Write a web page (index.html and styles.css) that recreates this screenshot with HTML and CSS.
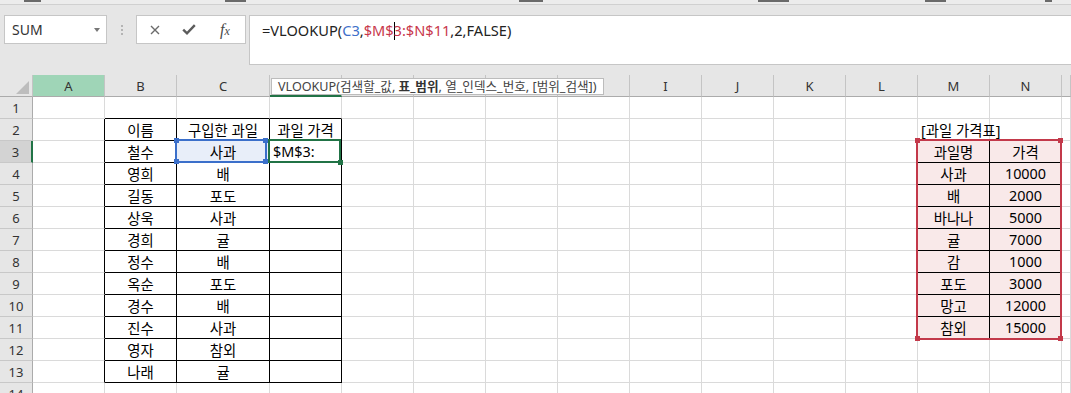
FILE: index.html
```html
<!DOCTYPE html>
<html lang="ko">
<head>
<meta charset="utf-8">
<title>Excel VLOOKUP</title>
<link rel="stylesheet" href="styles.css">
</head>
<body>
<div class="edge">
  <span class="frag f1"></span><span class="frag f2"></span><span class="frag f3"></span><span class="frag f4"></span><span class="frag f5"></span><span class="frag f6"></span>
</div>
<div class="fbar">
  <div class="namebox"><span>SUM</span><span class="drop"></span></div>
  <div class="grip"><i></i><i></i><i></i></div>
  <div class="btns">
    <svg class="ic-x" width="10" height="10" viewBox="0 0 10 10"><path d="M1 1L9 9M9 1L1 9" stroke="#6b6b6b" stroke-width="1.4" fill="none"/></svg>
    <svg class="ic-ok" width="14" height="11" viewBox="0 0 14 11"><path d="M1.2 5.6L5 9.3L12.8 1.2" stroke="#5c5c5c" stroke-width="2.4" fill="none"/></svg>
    <span class="fx">f<span class="fxx">x</span></span>
  </div>
  <div class="finput">=VLOOKUP(<span class="rb">C3</span>,<span class="rr">$M$</span><span class="caret"></span><span class="rr">3:$N$11</span>,2,FALSE)</div>
</div>
<div class="sheet">
  <!-- header (D–H labels lie under the function tooltip) -->
  <div class="c ch corner"><span class="tri"></span></div>
  <div class="c ch cga">A</div>
  <div class="c ch">B</div>
  <div class="c ch">C</div>
  <div class="c ch csel rel"><div class="tip">VLOOKUP(검색할_값, <b>표_범위</b>, 열_인덱스_번호, [범위_검색])</div></div>
  <div class="c ch"></div>
  <div class="c ch"></div>
  <div class="c ch"></div>
  <div class="c ch"></div>
  <div class="c ch">I</div>
  <div class="c ch">J</div>
  <div class="c ch">K</div>
  <div class="c ch">L</div>
  <div class="c ch">M</div>
  <div class="c ch">N</div>
  <div class="c ch"></div>
  <!-- row 1 -->
  <div class="c rh">1</div><div class="c"></div><div class="c kb"></div><div class="c kb"></div><div class="c kb"></div><div class="c"></div><div class="c"></div><div class="c"></div><div class="c"></div><div class="c"></div><div class="c"></div><div class="c"></div><div class="c"></div><div class="c"></div><div class="c"></div><div class="c"></div>
  <!-- row 2 -->
  <div class="c rh">2</div><div class="c kr"></div><div class="c kr kb">이름</div><div class="c kr kb">구입한 과일</div><div class="c kr kb">과일 가격</div><div class="c"></div><div class="c"></div><div class="c"></div><div class="c"></div><div class="c"></div><div class="c"></div><div class="c"></div><div class="c"></div><div class="c l kb">[과일 가격표]</div><div class="c kb"></div><div class="c"></div>
  <!-- row 3 -->
  <div class="c rh rsel">3</div><div class="c kr"></div><div class="c kr kb">철수</div><div class="c kr kb rel bl">사과<div class="sel sel-c"><i class="hd tl"></i><i class="hd tr"></i><i class="hd bl2"></i><i class="hd br"></i></div></div><div class="c kr kb l rel">$M$3:<div class="sel sel-d"><i class="hg"></i></div></div><div class="c"></div><div class="c"></div><div class="c"></div><div class="c"></div><div class="c"></div><div class="c"></div><div class="c"></div><div class="c"></div><div class="c kr kb pk rel">과일명<div class="sel sel-m"><i class="hr tl"></i><i class="hr tr"></i><i class="hr bl2"></i><i class="hr br"></i></div></div><div class="c kb pk">가격</div><div class="c"></div>
  <!-- row 4 -->
  <div class="c rh">4</div><div class="c kr"></div><div class="c kr kb">영희</div><div class="c kr kb">배</div><div class="c kr kb"></div><div class="c"></div><div class="c"></div><div class="c"></div><div class="c"></div><div class="c"></div><div class="c"></div><div class="c"></div><div class="c"></div><div class="c kr kb pk">사과</div><div class="c kb pk">10000</div><div class="c"></div>
  <!-- row 5 -->
  <div class="c rh">5</div><div class="c kr"></div><div class="c kr kb">길동</div><div class="c kr kb">포도</div><div class="c kr kb"></div><div class="c"></div><div class="c"></div><div class="c"></div><div class="c"></div><div class="c"></div><div class="c"></div><div class="c"></div><div class="c"></div><div class="c kr kb pk">배</div><div class="c kb pk">2000</div><div class="c"></div>
  <!-- row 6 -->
  <div class="c rh">6</div><div class="c kr"></div><div class="c kr kb">상욱</div><div class="c kr kb">사과</div><div class="c kr kb"></div><div class="c"></div><div class="c"></div><div class="c"></div><div class="c"></div><div class="c"></div><div class="c"></div><div class="c"></div><div class="c"></div><div class="c kr kb pk">바나나</div><div class="c kb pk">5000</div><div class="c"></div>
  <!-- row 7 -->
  <div class="c rh">7</div><div class="c kr"></div><div class="c kr kb">경희</div><div class="c kr kb">귤</div><div class="c kr kb"></div><div class="c"></div><div class="c"></div><div class="c"></div><div class="c"></div><div class="c"></div><div class="c"></div><div class="c"></div><div class="c"></div><div class="c kr kb pk">귤</div><div class="c kb pk">7000</div><div class="c"></div>
  <!-- row 8 -->
  <div class="c rh">8</div><div class="c kr"></div><div class="c kr kb">정수</div><div class="c kr kb">배</div><div class="c kr kb"></div><div class="c"></div><div class="c"></div><div class="c"></div><div class="c"></div><div class="c"></div><div class="c"></div><div class="c"></div><div class="c"></div><div class="c kr kb pk">감</div><div class="c kb pk">1000</div><div class="c"></div>
  <!-- row 9 -->
  <div class="c rh">9</div><div class="c kr"></div><div class="c kr kb">옥순</div><div class="c kr kb">포도</div><div class="c kr kb"></div><div class="c"></div><div class="c"></div><div class="c"></div><div class="c"></div><div class="c"></div><div class="c"></div><div class="c"></div><div class="c"></div><div class="c kr kb pk">포도</div><div class="c kb pk">3000</div><div class="c"></div>
  <!-- row 10 -->
  <div class="c rh">10</div><div class="c kr"></div><div class="c kr kb">경수</div><div class="c kr kb">배</div><div class="c kr kb"></div><div class="c"></div><div class="c"></div><div class="c"></div><div class="c"></div><div class="c"></div><div class="c"></div><div class="c"></div><div class="c"></div><div class="c kr kb pk">망고</div><div class="c kb pk">12000</div><div class="c"></div>
  <!-- row 11 -->
  <div class="c rh">11</div><div class="c kr"></div><div class="c kr kb">진수</div><div class="c kr kb">사과</div><div class="c kr kb"></div><div class="c"></div><div class="c"></div><div class="c"></div><div class="c"></div><div class="c"></div><div class="c"></div><div class="c"></div><div class="c"></div><div class="c kr kb pk">참외</div><div class="c kb pk">15000</div><div class="c"></div>
  <!-- row 12 -->
  <div class="c rh">12</div><div class="c kr"></div><div class="c kr kb">영자</div><div class="c kr kb">참외</div><div class="c kr kb"></div><div class="c"></div><div class="c"></div><div class="c"></div><div class="c"></div><div class="c"></div><div class="c"></div><div class="c"></div><div class="c"></div><div class="c"></div><div class="c"></div><div class="c"></div>
  <!-- row 13 -->
  <div class="c rh">13</div><div class="c kr"></div><div class="c kr kb">나래</div><div class="c kr kb">귤</div><div class="c kr kb"></div><div class="c"></div><div class="c"></div><div class="c"></div><div class="c"></div><div class="c"></div><div class="c"></div><div class="c"></div><div class="c"></div><div class="c"></div><div class="c"></div><div class="c"></div>
  <!-- row 14 -->
  <div class="c rh">14</div><div class="c"></div><div class="c"></div><div class="c"></div><div class="c"></div><div class="c"></div><div class="c"></div><div class="c"></div><div class="c"></div><div class="c"></div><div class="c"></div><div class="c"></div><div class="c"></div><div class="c"></div><div class="c"></div><div class="c"></div>
</div>
</body>
</html>
```

FILE: styles.css
```css
* { box-sizing: border-box; }
html, body { margin: 0; padding: 0; overflow: hidden; }
body {
  width: 1071px;
  height: 393px;
  background: #e6e6e6;
  font-family: "Noto Sans", "Noto Sans CJK KR", sans-serif;
}

/* cut-off ribbon edge */
.edge {
  height: 5px;
  background: #ececec;
  border-bottom: 1px solid #d0d0d0;
  display: flex;
  align-items: flex-start;
  overflow: hidden;
}
.frag { height: 2px; background: #6a6a6a; display: block; flex: none; }
.f1 { margin-left: 24px; width: 17px; }
.f2 { margin-left: 184px; width: 21px; }
.f3 { margin-left: 273px; width: 24px; }
.f4 { margin-left: 215px; width: 31px; }
.f5 { margin-left: 136px; width: 21px; }
.f6 { margin-left: 99px; width: 7px; }

/* formula bar */
.fbar {
  height: 70px;
  display: flex;
  align-items: flex-start;
  padding: 10px 0 0 4px;
}
.namebox {
  width: 103px;
  height: 29px;
  background: #fff;
  border: 1px solid #c6c6c6;
  display: flex;
  align-items: center;
  padding-left: 7px;
  font-size: 14px;
  color: #333;
}
.drop {
  margin-left: auto;
  margin-right: 6px;
  width: 0;
  height: 0;
  border-left: 3.5px solid transparent;
  border-right: 3.5px solid transparent;
  border-top: 4px solid #777;
}
.grip {
  width: 29px;
  height: 29px;
  display: flex;
  flex-direction: column;
  align-items: center;
  gap: 2px;
  padding-top: 10px;
}
.grip i { display: block; width: 2px; height: 2px; background: #b4b4b4; }
.btns {
  width: 110px;
  height: 29px;
  background: #fff;
  border: 1px solid #c6c6c6;
  display: flex;
  align-items: center;
  padding-left: 13px;
}
.ic-ok { margin-left: 22px; }
.fx {
  margin-left: 24px;
  font-family: "Liberation Serif", serif;
  font-style: italic;
  font-size: 16px;
  color: #4a4a4a;
  line-height: 1;
}
.fxx { font-size: 12px; }
.finput {
  margin-left: 3px;
  flex: 1;
  height: 50px;
  background: #fff;
  border: 1px solid #c6c6c6;
  border-right: none;
  padding: 4px 0 0 12px;
  font-size: 14.6px;
  line-height: 20px;
  color: #222;
  white-space: nowrap;
}
.rb { color: #3e6fc9; }
.rr { color: #c8374c; }
.caret {
  display: inline-block;
  width: 1px;
  height: 18px;
  background: #000;
  vertical-align: -4px;
  margin-right: -1px;
}

/* sheet grid */
.sheet {
  display: grid;
  grid-template-columns: 33px 72px 72px 93px repeat(11, 72px) 9px;
  grid-auto-rows: 22px;
  overflow: hidden;
  background: #fff;
  font-family: "Noto Sans", "Noto Sans CJK KR", sans-serif;
  font-size: 14.4px;
  color: #000;
}
.c {
  border-right: 1px solid #dadada;
  border-bottom: 1px solid #dadada;
  display: flex;
  align-items: center;
  justify-content: center;
  white-space: nowrap;
}
.ch {
  background: #e6e6e6;
  border-right-color: #c4c4c4;
  border-bottom-color: #ababab;
  font-size: 13px;
  color: #333;
}
.cga { background: #9fd5b7; }
.csel { border-bottom: 2px solid #217346; }
.rh {
  background: #e6e6e6;
  border-right-color: #ababab;
  border-bottom-color: #c8c8c8;
  font-size: 13px;
  color: #333;
}
.rsel { background: #d3d3d3; border-right: 2px solid #217346; }
.corner { justify-content: flex-end; align-items: flex-end; padding: 0 3px 2px 0; }
.tri {
  width: 0;
  height: 0;
  border-left: 13px solid transparent;
  border-bottom: 13px solid #bdbdbd;
}
.kr { border-right-color: #000; }
.kb { border-bottom-color: #000; }
.l { justify-content: flex-start; padding-left: 3px; }
.pk { background: #f9e9e9; }
.bl { background: #e8eef9; }
.rel { position: relative; }

/* function tooltip */
.tip {
  position: absolute;
  left: 1px;
  top: 3px;
  height: 17px;
  padding: 0 6px;
  background: #fff;
  border: 1px solid #bcbcbc;
  font-size: 12.6px;
  line-height: 15px;
  color: #444;
  white-space: nowrap;
  z-index: 5;
}
.tip b { color: #333; }

/* selection overlays */
.sel { position: absolute; left: -2px; top: -2px; z-index: 3; }
.sel-c { width: 92px; height: 24px; border: 2px solid #3b6fca; }
.sel-d { width: 73px; height: 24px; border: 2px solid #217346; }
.sel-m { width: 146px; height: 201px; border: 2px solid #c3394a; }
.hd, .hr { position: absolute; width: 5px; height: 5px; display: block; }
.hd { background: #3b6fca; }
.hr { background: #c3394a; }
.tl { left: -3px; top: -3px; }
.tr { right: -3px; top: -3px; }
.bl2 { left: -3px; bottom: -3px; }
.br { right: -3px; bottom: -3px; }
.hg {
  position: absolute;
  right: -4px;
  bottom: -4px;
  width: 5px;
  height: 5px;
  background: #217346;
  display: block;
}
```
